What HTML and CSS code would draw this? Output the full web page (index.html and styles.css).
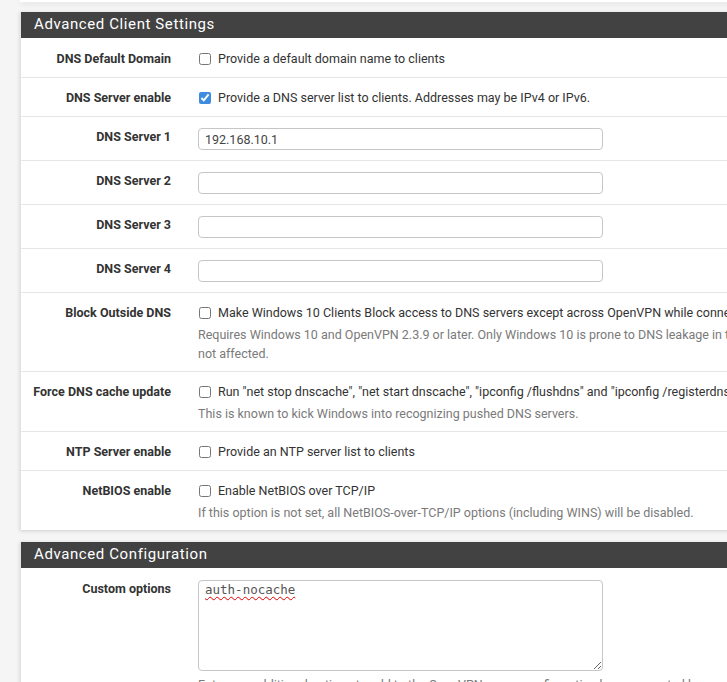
FILE: index.html
```html
<!DOCTYPE html>
<html>
<head>
<meta charset="utf-8">
<link rel="stylesheet" href="styles.css">
</head>
<body>
<div class="page">
  <div class="prev-panel"></div>

  <div class="panel">
    <div class="panel-heading">Advanced Client Settings</div>
    <div class="panel-body">
      <div class="row">
        <div class="label">DNS Default Domain</div>
        <div class="control"><label class="chk"><input type="checkbox"> Provide a default domain name to clients</label></div>
      </div>
      <div class="row">
        <div class="label">DNS Server enable</div>
        <div class="control"><label class="chk"><input type="checkbox" checked> Provide a DNS server list to clients. Addresses may be IPv4 or IPv6.</label></div>
      </div>
      <div class="row row-input">
        <div class="label">DNS Server 1</div>
        <div class="control"><input class="text" type="text" value="192.168.10.1"></div>
      </div>
      <div class="row row-input">
        <div class="label">DNS Server 2</div>
        <div class="control"><input class="text" type="text" value=""></div>
      </div>
      <div class="row row-input">
        <div class="label">DNS Server 3</div>
        <div class="control"><input class="text" type="text" value=""></div>
      </div>
      <div class="row row-input">
        <div class="label">DNS Server 4</div>
        <div class="control"><input class="text" type="text" value=""></div>
      </div>
      <div class="row">
        <div class="label">Block Outside DNS</div>
        <div class="control">
          <label class="chk"><input type="checkbox"> Make Windows 10 Clients Block access to DNS servers except across OpenVPN while connected, forcing clients to use only VPN DNS servers.</label>
          <div class="help">Requires Windows 10 and OpenVPN 2.3.9 or later. Only Windows 10 is prone to DNS leakage in this way, other clients are<br>not affected.</div>
        </div>
      </div>
      <div class="row">
        <div class="label">Force DNS cache update</div>
        <div class="control">
          <label class="chk"><input type="checkbox"> Run "net stop dnscache", "net start dnscache", "ipconfig /flushdns" and "ipconfig /registerdns" on connection initiation.</label>
          <div class="help">This is known to kick Windows into recognizing pushed DNS servers.</div>
        </div>
      </div>
      <div class="row">
        <div class="label">NTP Server enable</div>
        <div class="control"><label class="chk"><input type="checkbox"> Provide an NTP server list to clients</label></div>
      </div>
      <div class="row">
        <div class="label">NetBIOS enable</div>
        <div class="control">
          <label class="chk"><input type="checkbox"> Enable NetBIOS over TCP/IP</label>
          <div class="help">If this option is not set, all NetBIOS-over-TCP/IP options (including WINS) will be disabled.</div>
        </div>
      </div>
    </div>
  </div>

  <div class="panel">
    <div class="panel-heading">Advanced Configuration</div>
    <div class="panel-body">
      <div class="row row-area">
        <div class="label">Custom options</div>
        <div class="control">
          <textarea class="area" spellcheck="false">auth-nocache</textarea>
          <div class="help">Enter any additional options to add to the OpenVPN server configuration here, separated by semicolon.</div>
        </div>
      </div>
    </div>
  </div>
</div>
</body>
</html>
```

FILE: styles.css
```css
html, body {
  margin: 0;
  padding: 0;
  overflow: hidden;
  background: #f5f5f5;
}
body {
  font-family: Roboto, "Liberation Sans", sans-serif;
  font-size: 12.5px;
  color: #333;
}
.page {
  padding-left: 20px;
  width: 1100px;
}
.prev-panel {
  height: 2px;
  background: #fff;
  box-shadow: 0 2px 5px rgba(0,0,0,0.12);
  margin-bottom: 10px;
}
.panel {
  background: #fff;
  box-shadow: 0 1px 4px rgba(0,0,0,0.16);
  border-left: 1px solid #e3e3e3;
  margin-bottom: 12px;
}
.panel-heading {
  background: #424242;
  color: #fff;
  font-size: 15px;
  letter-spacing: 0.6px;
  height: 26px;
  line-height: 25px;
  padding-left: 13px;
  white-space: nowrap;
}
.panel-body {
  padding-top: 1px;
}
.row {
  display: grid;
  grid-template-columns: 150px 1fr;
  column-gap: 27px;
  padding: 10px 0 8px;
  border-top: 1px solid #e6e6e6;
}
.row:first-child {
  border-top: none;
}
.row-input {
  padding: 11px 0 10px;
}
.row-area {
  padding: 11px 0 0;
}
.label {
  text-align: right;
  font-weight: bold;
  line-height: 20px;
  white-space: nowrap;
}
.row-input .label,
.row-area .label {
  line-height: 18px;
}
.control {
  line-height: 20px;
  white-space: nowrap;
}
.chk {
  display: flex;
  align-items: center;
  height: 20px;
}
.chk input {
  margin: 0 7px 0 1px;
  width: 12px;
  height: 12px;
  accent-color: #3d8ce0;
}
.help {
  color: #7a7a7a;
  line-height: 19px;
  margin-top: 2px;
}
.text {
  box-sizing: border-box;
  width: 405px;
  height: 22px;
  border: 1px solid #c6c6c6;
  border-radius: 4px;
  padding: 0 6px;
  font-family: Roboto, "Liberation Sans", sans-serif;
  font-size: 12.5px;
  color: #444;
  display: block;
  margin: 0;
}
.area {
  box-sizing: border-box;
  display: block;
  width: 405px;
  height: 91px;
  margin: 0;
  border: 1px solid #c6c6c6;
  border-radius: 4px;
  padding: 1px 6px;
  font-family: "DejaVu Sans Mono", monospace;
  font-size: 12.5px;
  line-height: 16px;
  color: #555;
  text-decoration: underline wavy #e00000;
  text-decoration-thickness: 1px;
  text-underline-offset: 2px;
  resize: both;
}
.row-area .help {
  margin-top: 4px;
}
```
